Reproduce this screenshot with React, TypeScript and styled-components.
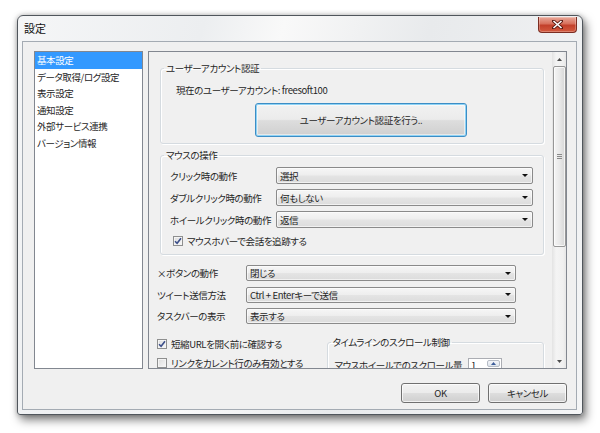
import React from 'react';
import styled, { createGlobalStyle } from 'styled-components';

const uiFont = `"Noto Sans CJK JP", "Liberation Sans", sans-serif`;

const GlobalStyle = createGlobalStyle`
  html, body {
    margin: 0;
    padding: 0;
    background: #ffffff;
  }
  body {
    font-family: ${uiFont};
    font-size: 9.5px;
    letter-spacing: -0.4px;
    color: #262626;
    font-feature-settings: "palt";
  }
  * {
    box-sizing: border-box;
  }
`;

const Page = styled.div`
  width: 600px;
  height: 433px;
  padding: 15px 17px;
  overflow: hidden;
`;

const Window = styled.div`
  width: 566px;
  height: 400px;
  border: 1px solid #50565c;
  border-radius: 6px 6px 3px 3px;
  background: linear-gradient(
    105deg,
    #f5f6f7 0%,
    #eceef0 28%,
    #f9f9f9 40%,
    #e8eaec 62%,
    #f4f5f6 100%
  );
  box-shadow: 3px 5px 10px rgba(0, 0, 0, 0.5), 0 0 5px rgba(0, 0, 0, 0.25);
  display: flex;
  flex-direction: column;
  padding: 0 5px 4px 4px;
`;

const TitleBar = styled.div`
  height: 25px;
  display: flex;
  justify-content: space-between;
  align-items: flex-start;
`;

const Title = styled.div`
  padding: 6px 0 0 2px;
  font-size: 11px;
  letter-spacing: 0;
  line-height: 13px;
  color: #111;
`;

const CloseButton = styled.div`
  margin-top: 1px;
  width: 39px;
  height: 16px;
  border: 1px solid #7b2d22;
  border-top: none;
  border-radius: 0 0 4px 4px;
  background: linear-gradient(#e9a899 0%, #d7705c 45%, #c2402b 55%, #d35a3f 100%);
  box-shadow: inset 0 0 0 1px rgba(255, 255, 255, 0.25);
  display: flex;
  align-items: center;
  justify-content: center;
`;

const Client = styled.div`
  flex: 1;
  border: 1px solid #a4abb3;
  background: #f0f0f0;
  display: flex;
  flex-direction: column;
  padding: 9px 9px 5px 11px;
`;

const Body = styled.div`
  height: 318px;
  display: flex;
  gap: 5px;
`;

const NavList = styled.div`
  width: 109px;
  border: 1px solid #828790;
  background: #ffffff;
`;

const NavItem = styled.div<{ $active?: boolean }>`
  height: 16.5px;
  line-height: 16.5px;
  padding-left: 2px;
  white-space: nowrap;
  background: ${(p) => (p.$active ? '#3399ff' : 'transparent')};
  color: ${(p) => (p.$active ? '#ffffff' : '#262626')};
`;

const Panel = styled.div`
  flex: 1;
  border: 1px solid #828790;
  background: #f0f0f0;
  display: flex;
  overflow: hidden;
`;

const Content = styled.div`
  flex: 1;
  padding: 10px 8px 0 8px;
  overflow: hidden;
`;

const Group = styled.fieldset`
  margin: 0 0 0 3px;
  border: 1px solid #d5dbe0;
  border-radius: 3px;
  box-shadow: inset 1px 1px 0 #ffffff, 1px 1px 0 #ffffff;
  padding: 0;
  min-width: 0;
`;

const Legend = styled.legend`
  margin-left: 3px;
  padding: 0 2px;
  line-height: 12px;
  white-space: nowrap;
`;

const AccountBody = styled.div`
  padding: 10px 10px 6px 15px;
  display: flex;
  flex-direction: column;
  align-items: flex-start;
`;

const Text = styled.div`
  line-height: 12px;
  white-space: nowrap;
`;

const Button = styled.div<{ $focus?: boolean }>`
  display: flex;
  align-items: center;
  justify-content: center;
  border: 1px solid ${(p) => (p.$focus ? '#3c8dc5' : '#707070')};
  border-radius: 3px;
  background: linear-gradient(#f2f2f2 0%, #ebebeb 48%, #dddddd 52%, #cfcfcf 100%);
  box-shadow: ${(p) =>
    p.$focus
      ? 'inset 0 0 0 1px #8fd3f5, inset 0 0 0 2px rgba(255,255,255,0.5)'
      : 'inset 0 0 0 1px rgba(255,255,255,0.7)'};
  white-space: nowrap;
`;

const AuthButton = styled(Button)`
  margin: 7px 0 0 79px;
  width: 212px;
  height: 34px;
`;

const DialogButton = styled(Button)`
  width: 79px;
  height: 20px;
`;

const MouseGroup = styled(Group)`
  margin-top: 5px;
`;

const MouseBody = styled.div`
  padding: 6px 10px 7px 9px;
  display: flex;
  flex-direction: column;
  gap: 5px;
`;

const FieldRow = styled.div<{ $label: number; $h: number }>`
  display: grid;
  grid-template-columns: ${(p) => p.$label}px 1fr;
  align-items: center;
  height: ${(p) => p.$h}px;
`;

const Combo = styled.div`
  height: 100%;
  border: 1px solid #8a8a8a;
  border-radius: 2px;
  background: linear-gradient(#f6f6f6 0%, #eeeeee 48%, #e4e4e4 52%, #dcdcdc 100%);
  box-shadow: inset 0 0 0 1px rgba(255, 255, 255, 0.6);
  display: flex;
  align-items: center;
  justify-content: space-between;
  padding: 0 4px 0 3px;
  white-space: nowrap;
`;

const Arrow = styled.span`
  width: 0;
  height: 0;
  border-left: 3px solid transparent;
  border-right: 3px solid transparent;
  border-top: 3px solid #111;
`;

const CheckRow = styled.div<{ $indent?: number }>`
  display: flex;
  align-items: center;
  gap: 4px;
  height: 12px;
  padding-left: ${(p) => p.$indent ?? 0}px;
  white-space: nowrap;
`;

const Box = styled.span`
  width: 10px;
  height: 10px;
  border: 1px solid #8e8f8f;
  background: linear-gradient(135deg, #dcdcdc, #f8f8f8);
  box-shadow: inset 0 0 0 1px #f4f4f4;
  display: flex;
  align-items: center;
  justify-content: center;
  flex: none;
`;

const Options = styled.div`
  margin-top: 10px;
  display: flex;
  flex-direction: column;
  gap: 5.5px;
`;

const OptionRow = styled(FieldRow)`
  width: 359px;
`;

const Bottom = styled.div`
  margin-top: 14px;
  display: flex;
  align-items: flex-start;
`;

const CheckColumn = styled.div`
  width: 170px;
  display: flex;
  flex-direction: column;
  gap: 7px;
`;

const ScrollGroup = styled(Group)`
  margin: -2px 0 0 0;
  width: 218px;
  height: 60px;
`;

const ScrollBody = styled.div`
  padding: 10px 0 0 7px;
  display: flex;
  align-items: center;
  gap: 6px;
`;

const Spinner = styled.div`
  width: 34px;
  height: 14px;
  border: 1px solid #abadb3;
  background: #ffffff;
  display: flex;
  justify-content: space-between;
  padding-left: 2px;
  line-height: 12px;
`;

const SpinUp = styled.div`
  width: 13px;
  height: 7px;
  margin-top: 1px;
  margin-right: 1px;
  border: 1px solid #b6bcc6;
  border-radius: 2px;
  background: linear-gradient(#f4f6f9, #dde4ec);
  display: flex;
  align-items: center;
  justify-content: center;
`;

const ScrollBar = styled.div`
  width: 14px;
  background: linear-gradient(90deg, #e3e3e3, #f4f4f4 30%, #f0f0f0 80%, #e6e6e6);
  display: flex;
  flex-direction: column;
  align-items: center;
`;

const ScrollArrow = styled.div`
  height: 14px;
  width: 100%;
  display: flex;
  align-items: center;
  justify-content: center;
`;

const Thumb = styled.div`
  width: 13px;
  height: 181px;
  border: 1px solid #979797;
  border-radius: 2px;
  background: linear-gradient(90deg, #f5f5f5, #e9e9e9 50%, #d6d6d6);
  box-shadow: inset 0 0 0 1px rgba(255, 255, 255, 0.7);
  display: flex;
  align-items: center;
  justify-content: center;
`;

const Track = styled.div`
  flex: 1;
`;

const Footer = styled.div`
  margin-top: 14px;
  display: flex;
  justify-content: flex-end;
  gap: 8px;
`;

const Check = ({ checked }: { checked?: boolean }) => (
  <Box>
    {checked && (
      <svg width="8" height="8" viewBox="0 0 8 8">
        <path d="M1 4.2 L3.1 6.3 L7 1.3" fill="none" stroke="#3c4f8a" strokeWidth="1.6" />
      </svg>
    )}
  </Box>
);

const Tri = ({ up, color = '#4d4d4d' }: { up?: boolean; color?: string }) => (
  <svg width="5" height="3" viewBox="0 0 5 3">
    <path d={up ? 'M0 3 L2.5 0 L5 3 Z' : 'M0 0 L2.5 3 L5 0 Z'} fill={color} />
  </svg>
);

const navItems = [
  '基本設定',
  'データ取得/ログ設定',
  '表示設定',
  '通知設定',
  '外部サービス連携',
  'バージョン情報',
];

const mouseRows = [
  ['クリック時の動作', '選択'],
  ['ダブルクリック時の動作', '何もしない'],
  ['ホイールクリック時の動作', '返信'],
];

const optionRows = [
  ['×ボタンの動作', '閉じる'],
  ['ツイート送信方法', 'Ctrl + Enterキーで送信'],
  ['タスクバーの表示', '表示する'],
];

export default function App() {
  return (
    <Page>
      <GlobalStyle />
      <Window>
        <TitleBar>
          <Title>設定</Title>
          <CloseButton>
            <svg width="11" height="9" viewBox="0 0 11 9">
              <path
                d="M1.5 1 L9.5 8 M9.5 1 L1.5 8"
                stroke="#5a1a12"
                strokeWidth="3.2"
                strokeLinecap="round"
              />
              <path d="M1.5 1 L9.5 8 M9.5 1 L1.5 8" stroke="#ffffff" strokeWidth="1.6" />
            </svg>
          </CloseButton>
        </TitleBar>
        <Client>
          <Body>
            <NavList>
              {navItems.map((item, i) => (
                <NavItem key={item} $active={i === 0}>
                  {item}
                </NavItem>
              ))}
            </NavList>
            <Panel>
              <Content>
                <Group>
                  <Legend>ユーザーアカウント認証</Legend>
                  <AccountBody>
                    <Text>現在のユーザーアカウント: freesoft100</Text>
                    <AuthButton $focus>ユーザーアカウント認証を行う..</AuthButton>
                  </AccountBody>
                </Group>
                <MouseGroup>
                  <Legend>マウスの操作</Legend>
                  <MouseBody>
                    {mouseRows.map(([label, value]) => (
                      <FieldRow key={label} $label={106} $h={17}>
                        <Text>{label}</Text>
                        <Combo>
                          {value}
                          <Arrow />
                        </Combo>
                      </FieldRow>
                    ))}
                    <CheckRow $indent={3} style={{ marginTop: 2 }}>
                      <Check checked />
                      マウスホバーで会話を追跡する
                    </CheckRow>
                  </MouseBody>
                </MouseGroup>
                <Options>
                  {optionRows.map(([label, value]) => (
                    <OptionRow key={label} $label={89} $h={16}>
                      <Text>{label}</Text>
                      <Combo>
                        {value}
                        <Arrow />
                      </Combo>
                    </OptionRow>
                  ))}
                </Options>
                <Bottom>
                  <CheckColumn>
                    <CheckRow>
                      <Check checked />
                      短縮URLを開く前に確認する
                    </CheckRow>
                    <CheckRow>
                      <Check />
                      リンクをカレント行のみ有効とする
                    </CheckRow>
                  </CheckColumn>
                  <ScrollGroup>
                    <Legend>タイムラインのスクロール制御</Legend>
                    <ScrollBody>
                      <Text>マウスホイールでのスクロール量</Text>
                      <Spinner>
                        1
                        <SpinUp>
                          <Tri up color="#3d5d9a" />
                        </SpinUp>
                      </Spinner>
                    </ScrollBody>
                  </ScrollGroup>
                </Bottom>
              </Content>
              <ScrollBar>
                <ScrollArrow>
                  <Tri up />
                </ScrollArrow>
                <Thumb>
                  <svg width="5" height="6" viewBox="0 0 5 6">
                    <path d="M0 0.5 H5 M0 2.5 H5 M0 4.5 H5" stroke="#8a8a8a" strokeWidth="1" />
                  </svg>
                </Thumb>
                <Track />
                <ScrollArrow>
                  <Tri />
                </ScrollArrow>
              </ScrollBar>
            </Panel>
          </Body>
          <Footer>
            <DialogButton>OK</DialogButton>
            <DialogButton>キャンセル</DialogButton>
          </Footer>
        </Client>
      </Window>
    </Page>
  );
}
